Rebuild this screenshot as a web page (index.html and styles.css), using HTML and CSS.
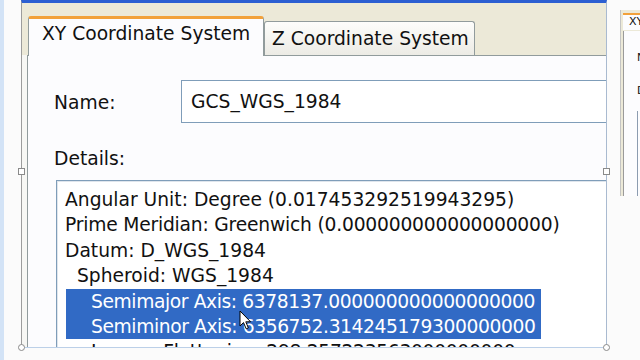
FILE: index.html
```html
<!DOCTYPE html>
<html lang="en">
<head>
  <meta charset="UTF-8">
  <title>Spatial Reference Properties</title>
  <link rel="stylesheet" href="styles.css">
</head>
<body>

  <div class="screen">
    <div class="edge"></div>

    <div class="frame">
      <div class="dialog">
        <div class="tabs">
          <div class="tab active">XY Coordinate System</div>
          <div class="tab">Z Coordinate System</div>
        </div>

        <div class="gutter">
          <div class="panel">
            <div class="name-row">
              <label class="label name-label">Name:</label>
              <div class="name-input">GCS_WGS_1984</div>
            </div>

            <div class="label details-label">Details:</div>

            <div class="details">
              <p>Angular Unit: Degree (0.017453292519943295)</p>
              <p class="tight">Prime Meridian: Greenwich (0.000000000000000000)</p>
              <p>Datum: D_WGS_1984</p>
              <p class="lvl1">Spheroid: WGS_1984</p>
              <div class="selected">
                <p>Semimajor Axis: 6378137.000000000000000000</p>
                <p>Semiminor Axis: 6356752.314245179300000000</p>
              </div>
              <p class="lvl2">Inverse Flattening: 298.257223563000000000</p>
            </div>
          </div>
        </div>
      </div>

      <!-- resize handles of the selected picture -->
      <span class="handle sq left-mid"></span>
      <span class="handle sq right-mid"></span>
      <span class="handle dot left-bot"></span>
      <span class="handle dot right-bot"></span>
    </div>

    <div class="mini">
      <div class="mini-tabs">
        <div class="mini-tab">XY</div>
      </div>
      <div class="mini-panel">
        <div class="mini-label">N</div>
        <div class="mini-label">D</div>
        <div class="mini-box"></div>
      </div>
    </div>
  </div>

  <svg class="cursor" width="13" height="21" viewBox="0 0 13 21">
    <path d="M1 1 L1 16 L4.5 12.6 L7.2 18.8 L9.4 17.9 L6.8 11.8 L11.6 11.8 Z" fill="#fff" stroke="#000" stroke-width="1" stroke-linejoin="round"/>
  </svg>

</body>
</html>
```

FILE: styles.css
```css
html, body { margin: 0; padding: 0; }
body { width: 640px; height: 360px; overflow: hidden; background: #fbfbfb; font-family: "DejaVu Sans", Verdana, sans-serif; color: #111; position: relative; }

.screen { display: flex; align-items: flex-start; height: 360px; }
.edge { width: 4px; height: 360px; background: #d3e3f6; margin-right: 17px; flex: none; }

.frame { position: relative; flex: none; width: 584px; height: 344px; border-top: 3px solid #2c5fd2; border-left: 1px solid #9c9c9c; border-right: 1px solid #a9bad0; border-bottom: 1px solid #bcd0e8; }
.dialog { width: 100%; height: 100%; overflow: hidden; background: #ece9d8; }

.tabs { display: flex; align-items: flex-end; height: 52px; padding-left: 6px; }
.tab { font-size: 18.7px; height: 33px; line-height: 34px; padding: 0 9px 0 7px; width: 193px; border: 1px solid #919b9c; border-bottom: none; border-radius: 3px 3px 0 0; background: linear-gradient(#fdfdfb, #ecebe5); white-space: nowrap; overflow: hidden; }
.tab.active { height: 37px; width: 214px; padding-left: 13px; padding-right: 7px; line-height: 30px; border-top: 3px solid #f2a13a; background: #fcfcfe; position: relative; z-index: 1; margin-bottom: -1px; }

.gutter { background: #f7f7f4; padding-left: 5px; height: 300px; }
.panel { background: #fcfcfe; border-top: 1px solid #919b9c; border-left: 1px solid #919b9c; height: 300px; padding-left: 26px; }

.label { font-size: 18.7px; line-height: 22px; }
.name-row { display: flex; align-items: center; padding-top: 24px; }
.name-label { width: 127px; flex: none; padding-top: 2px; }
.name-input { flex: none; width: 440px; height: 41px; line-height: 41px; border: 1px solid #7f9db9; background: #fff; font-size: 18.7px; padding-left: 9px; }

.details-label { margin-top: 25px; }
.details { margin-top: 10px; margin-left: 2px; width: 600px; height: 200px; border: 1px solid #7f9db9; box-shadow: inset 1px 1px 0 #dfe5ec; background: #fff; padding-top: 6px; }
.details p { margin: 0; font-size: 18.7px; line-height: 25.4px; padding-left: 8px; white-space: nowrap; }
.details p.tight { letter-spacing: -0.2px; }
.details p.lvl1 { padding-left: 20px; }
.details p.lvl2 { padding-left: 34px; letter-spacing: -0.3px; }
.selected { margin-left: 9px; width: 475px; background: #316ac5; }
.selected p { color: #fff; padding-left: 25px; letter-spacing: -0.4px; }

.handle { position: absolute; box-sizing: border-box; background: #fff; border: 1px solid #8a8a8a; }
.handle.sq { width: 7px; height: 7px; top: 165px; }
.handle.dot { width: 7px; height: 7px; border-radius: 50%; bottom: -4px; }
.left-mid, .left-bot { left: -4px; }
.right-mid, .right-bot { right: -4px; }

.mini { flex: none; width: 19px; height: 186px; margin-top: 10px; margin-left: 13px; border-left: 1px solid #c4c4c4; background: #ece9d8; overflow: hidden; }
.mini-tabs { height: 18px; padding-top: 3px; padding-left: 2px; }
.mini-tab { height: 15px; border-top: 2px solid #f2a13a; background: #fcfcfe; font-size: 11px; line-height: 14px; padding-left: 6px; white-space: nowrap; }
.mini-panel { background: #fcfcfe; border-left: 1px solid #9a9a9a; margin-left: 2px; height: 170px; padding-left: 13px; padding-top: 20px; box-sizing: border-box; }
.mini-label { font-size: 11px; line-height: 13px; margin-bottom: 20px; white-space: nowrap; }
.mini-box { border-left: 1px solid #8c9cb0; height: 90px; margin-top: -6px; }

.cursor { position: absolute; left: 239px; top: 310px; }
```
